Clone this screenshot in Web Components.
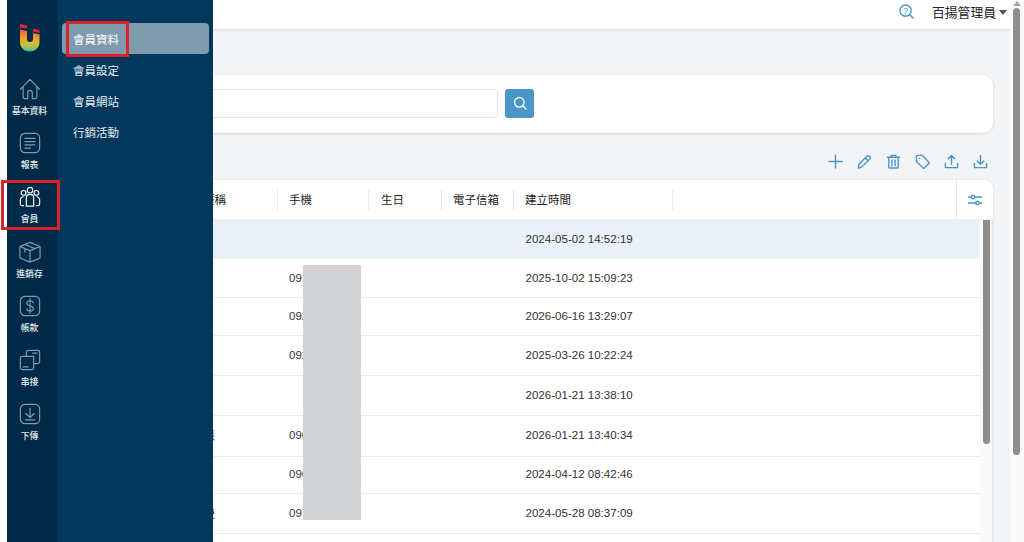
<!DOCTYPE html>
<html lang="zh-Hant">
<head>
<meta charset="utf-8">
<title>會員資料</title>
<style>
  html, body { margin: 0; height: 100%; overflow: hidden; }
  body { font-family: "Liberation Sans", "Noto Sans CJK TC", sans-serif; background: #fff; }
</style>
</head>
<body>
<app-shell>
  <nav-rail slot="rail"></nav-rail>
  <sub-menu slot="menu"></sub-menu>
  <top-bar slot="top"></top-bar>
  <search-card slot="content"></search-card>
  <tool-bar slot="content"></tool-bar>
  <member-table slot="content"></member-table>
</app-shell>

<script>
const RAIL_ICONS = {
  home: '<path d="M1.500 12.500 12 1.500l10.500 11M4.500 9.500V21a1.500 1.500 0 0 0 1.500 1.500h3.500V16a2.500 2.500 0 0 1 5 0v6.500H18a1.500 1.500 0 0 0 1.500-1.500V9.500"/>',
  report: '<rect x="1.500" y="1.500" width="21" height="21" rx="5"/><path d="M6.500 7h11M6.500 10.500h11M6.500 14h11M6.500 17.500h6"/>',
  members: '<circle cx="12" cy="4.500" r="3"/><circle cx="5" cy="7.500" r="2.600"/><circle cx="19" cy="7.500" r="2.600"/><path d="M8 22V12.500a3 3 0 0 1 3-3h2a3 3 0 0 1 3 3V22ZM5 21.500H3.500a2 2 0 0 1-2-2V15a3.500 3.500 0 0 1 3-3.300M19 21.500h1.500a2 2 0 0 0 2-2V15a3.500 3.500 0 0 0-3-3.300"/>',
  box: '<path d="M12 1.500 23 6v12.500L12 23 1 18.500V6ZM1 6l11 4.500L23 6M12 10.500V23M6.500 3.800 17.500 8.300M6.500 8.300V12"/>',
  money: '<rect x="1.500" y="1.500" width="21" height="21" rx="5"/><path d="M15.500 8.500C15 7 13.500 6.300 12 6.300c-2 0-3.500 1-3.500 2.800 0 3.800 7.200 1.800 7.200 5.700 0 1.800-1.700 2.800-3.700 2.800-1.700 0-3.200-.8-3.700-2.300M12 4v16"/>',
  link: '<path d="M8 8V3.500a2 2 0 0 1 2-2h10.500a2 2 0 0 1 2 2V14a2 2 0 0 1-2 2H16M16 8H3.500a2 2 0 0 0-2 2v10.500a2 2 0 0 0 2 2H14a2 2 0 0 0 2-2ZM15 4.500h4.500M4.500 19.500H10"/>',
  download: '<rect x="1.500" y="1.500" width="21" height="21" rx="5"/><path d="M12 5.500v10M7.500 11.500l4.500 4.500 4.500-4.500M7 18.500h10"/>'
};

const RAIL_ITEMS = [
  { icon: "home", label: "基本資料" },
  { icon: "report", label: "報表" },
  { icon: "members", label: "會員", active: true },
  { icon: "box", label: "進銷存" },
  { icon: "money", label: "帳款" },
  { icon: "link", label: "串接" },
  { icon: "download", label: "下傳" }
];

class AppShell extends HTMLElement {
  constructor() {
    super();
    this.attachShadow({ mode: "open" });
    this.shadowRoot.innerHTML = `
      <style>
        :host { display: flex; height: 542px; overflow: hidden; position: relative; padding-left: 7px; box-sizing: border-box; }
        .main { flex: 1; min-width: 0; background: #f3f4f6; overflow: hidden; }
        .content { padding: 46px 17px 0 14px; }
        .menu { position: absolute; left: 58px; top: 0; bottom: 0; z-index: 5; }
        .mask { position: absolute; left: 303px; top: 265px; width: 58px; height: 255px; background: #d1d2d3; z-index: 3; }
        .mark { position: absolute; box-sizing: border-box; border: 3px solid #d8232a; z-index: 6; }
        .mark.sub { left: 66px; top: 21px; width: 63px; height: 36px; }
        .mark.nav { left: 1px; top: 180px; width: 59px; height: 50px; }
        .scroll { width: 14px; flex: none; background: #fafafa; position: relative; }
        .arrow { width: 0; height: 0; margin: 1px auto 0; border: 4px solid transparent; border-top: 0; border-bottom: 5px solid #a8a8a8; }
        .thumb { width: 7px; height: 447px; margin: 2px 0 0 3px; background: #8e8e8e; border-radius: 4px; }
      </style>
      <slot name="rail"></slot>
      <div class="main">
        <slot name="top"></slot>
        <div class="content"><slot name="content"></slot></div>
      </div>
      <div class="scroll"><div class="arrow"></div><div class="thumb"></div></div>
      <div class="menu"><slot name="menu"></slot></div>
      <div class="mask"></div>
      <div class="mark sub"></div>
      <div class="mark nav"></div>
    `;
  }
}

class NavRail extends HTMLElement {
  constructor() {
    super();
    this.attachShadow({ mode: "open" });
    const items = RAIL_ITEMS.map((i) => `
      <div class="item ${i.active ? "on" : ""}">
        <svg viewBox="0 0 24 24" width="22" height="22">${RAIL_ICONS[i.icon]}</svg>
        <span>${i.label}</span>
      </div>`).join("");
    this.shadowRoot.innerHTML = `
      <style>
        :host { display: block; width: 51px; flex: none; background: #002a47; color: #e6ebef; box-sizing: border-box; padding-right: 6px; }
        .logo { display: block; margin: 24px 0 26px 13px; }
        .item { display: flex; flex-direction: column; align-items: center; height: 54.200px; }
        svg { fill: none; stroke: #7f99ad; stroke-width: 1.300; stroke-linecap: round; stroke-linejoin: round; }
        .on svg { stroke: #f2f5f7; }
        span { font-size: 8.800px; line-height: 12px; margin-top: 5px; white-space: nowrap; font-weight: 500; }
      </style>
      <svg class="logo" viewBox="0 0 20 28" width="20" height="28" style="stroke:none">
        <defs><linearGradient id="u" x1="0" y1="0" x2="0" y2="1">
          <stop offset="0" stop-color="#ef5a3c"/><stop offset=".4" stop-color="#f4a12c"/><stop offset=".7" stop-color="#c3c440"/><stop offset="1" stop-color="#3fbf9a"/>
        </linearGradient></defs>
        <path fill="#e4234f" d="M0 0 7 1.500V4.500L0 3.500ZM13 4.500l6.500 1.500v3L13 7.500Z"/>
        <path fill="url(#u)" d="M0 5.500 7 7V15a3 3 0 0 0 6 0V9l6.500 1.500V18c0 5.500-4 9.500-9.750 9.500S0 23.500 0 18Z"/>
      </svg>
      ${items}
    `;
  }
}

class SubMenu extends HTMLElement {
  constructor() {
    super();
    this.attachShadow({ mode: "open" });
    const rows = ["會員資料", "會員設定", "會員網站", "行銷活動"]
      .map((t, i) => `<div class="row ${i === 0 ? "on" : ""}">${t}</div>`).join("");
    this.shadowRoot.innerHTML = `
      <style>
        :host { display: block; width: 155px; height: 100%; background: #03375b; color: #e8edf1; box-sizing: border-box; padding: 23px 4px 0 4px; }
        .row { height: 31px; line-height: 35px; padding-left: 11px; font-size: 11.500px; border-radius: 4px; }
        .on { background: #7f99ad; color: #fff; }
      </style>
      ${rows}
    `;
  }
}

class TopBar extends HTMLElement {
  constructor() {
    super();
    this.attachShadow({ mode: "open" });
    this.shadowRoot.innerHTML = `
      <style>
        :host { display: flex; align-items: center; justify-content: flex-end; height: 29px; background: #fff; box-shadow: 0 1px 3px rgba(0,0,0,.14); padding-right: 3px; position: relative; color: #222; }
        svg { fill: none; stroke: #4a96c9; stroke-width: 1.500; stroke-linecap: round; margin-right: 18px; margin-top: -6px; }
        .name { font-size: 12.800px; margin-top: -6px; }
        .caret { width: 0; height: 0; border: 4px solid transparent; border-bottom: 0; border-top: 5px solid #555; margin: -4px 0 0 3px; }
        text { font: 9px "Liberation Sans", sans-serif; fill: #4a96c9; stroke: none; }
      </style>
      <svg viewBox="0 0 16 16" width="15" height="15"><circle cx="7" cy="7" r="6"/><path d="M11.500 11.500l3.500 3.500"/><text x="4.500" y="10.200">?</text></svg>
      <span class="name">百揚管理員</span><span class="caret"></span>
    `;
  }
}

class SearchCard extends HTMLElement {
  constructor() {
    super();
    this.attachShadow({ mode: "open" });
    this.shadowRoot.innerHTML = `
      <style>
        :host { display: flex; align-items: center; gap: 7px; height: 58px; box-sizing: border-box; padding: 0 0 2px 14px; background: #fff; border-radius: 10px; box-shadow: 0 1px 3px rgba(0,0,0,.13); }
        .input { width: 410px; height: 27px; border: 1px solid #e3e4e6; border-radius: 3px; }
        .btn { width: 29px; height: 29px; background: #4a96c9; border-radius: 3px; display: flex; align-items: center; justify-content: center; }
        svg { fill: none; stroke: #fff; stroke-width: 1.300; stroke-linecap: round; }
      </style>
      <div class="input"></div>
      <div class="btn"><svg viewBox="0 0 14 14" width="14" height="14"><circle cx="6.300" cy="6.300" r="4.800"/><path d="M10 10l3 3"/></svg></div>
    `;
  }
}

class ToolBar extends HTMLElement {
  constructor() {
    super();
    this.attachShadow({ mode: "open" });
    const icons = [
      '<path d="M8 1v14M1 8h14"/>',
      '<path d="M2 11 10.500 2.500a1.800 1.800 0 0 1 3 3L5 14l-3.500 1ZM9 4.500l2.500 2.500"/>',
      '<path d="M1.500 3.500h13M5.500 3.500V1.500h5v2M3 3.500v10.500a1 1 0 0 0 1 1h8a1 1 0 0 0 1-1V3.500M6.300 6.500v6M9.700 6.500v6"/>',
      '<path d="M1.500 2.500a1 1 0 0 1 1-1H8l6.800 7.300a1 1 0 0 1 0 1.400L10 15a1 1 0 0 1-1.400 0L1.500 8ZM4.800 4.800h.1"/>',
      '<path d="M1.500 10v4.500h13V10M8 11V2M4.500 5 8 1.500 11.500 5"/>',
      '<path d="M1.500 10v4.500h13V10M8 1.500V11M4.500 7.500 8 11l3.500-3.500"/>'
    ].map((p) => `<svg viewBox="0 0 16 16" width="15" height="15">${p}</svg>`).join("");
    this.shadowRoot.innerHTML = `
      <style>
        :host { display: flex; justify-content: flex-end; gap: 14px; height: 47px; box-sizing: border-box; padding: 9px 5px 0 0; align-items: center; }
        svg { fill: none; stroke: #4a96c9; stroke-width: 1.500; stroke-linecap: round; stroke-linejoin: round; }
      </style>
      ${icons}
    `;
  }
}

const MEMBER_ROWS = [
  { h: 40, phone: "", at: "2024-05-02 14:52:19", on: true },
  { h: 38, phone: "0912", at: "2025-10-02 15:09:23" },
  { h: 38, phone: "0921", at: "2026-06-16 13:29:07" },
  { h: 40, phone: "0928", at: "2025-03-26 10:22:24" },
  { h: 40, phone: "", at: "2026-01-21 13:38:10" },
  { h: 41, name: "陳小慧", phone: "0963", at: "2026-01-21 13:40:34" },
  { h: 37, phone: "0966", at: "2024-04-12 08:42:46" },
  { h: 40, name: "林佳瑩", phone: "0975", at: "2024-05-28 08:37:09" },
  { h: 40, phone: "", at: "" }
];

class MemberTable extends HTMLElement {
  constructor() {
    super();
    this.attachShadow({ mode: "open" });
    const rows = MEMBER_ROWS.map((r) => `
      <div class="row ${r.on ? "on" : ""}" style="height:${r.h}px">
        <div class="name">${r.name || ""}</div>
        <div class="phone">${r.phone}</div>
        <div></div><div></div>
        <div class="at">${r.at}</div>
      </div>`).join("");
    this.shadowRoot.innerHTML = `
      <style>
        :host { display: block; background: #fff; border-radius: 8px 8px 0 0; box-shadow: 0 0 2px rgba(0,0,0,.14); height: 400px; font-size: 11.500px; color: #333; overflow: hidden; }
        .head, .row { display: grid; grid-template-columns: 206px 91px 73px 72px 159px; align-items: center; }
        .head { height: 39px; border-bottom: 1px solid #eceef0; grid-template-columns: 206px 91px 73px 72px 159px 1fr 37px; color: #222; }
        .head > div { height: 20px; line-height: 20px; padding-left: 11px; border-right: 1px solid #e6e7e9; box-sizing: border-box; white-space: nowrap; }
        .head > .birth { padding-left: 12px; }
        .head .name { text-align: right; padding: 0 51px 0 0; }
        .head .blank { border-right: 0; }
        .head .cfg { height: 39px; border-right: 0; border-left: 1px solid #e6e7e9; padding: 0 1px 0 0; display: flex; align-items: center; justify-content: center; }
        .cfg svg { fill: none; stroke: #4a96c9; stroke-width: 1.500; stroke-linecap: round; }
        .body { display: flex; }
        .rows { flex: 1; min-width: 0; }
        .row { box-sizing: border-box; border-bottom: 1px solid #ebeced; padding-bottom: 2px; }
        .on { background: #e9f0f7; border-bottom-color: #fff; }
        .phone { padding-left: 11px; }
        .at { padding-left: 11.500px; font-size: 11.550px; white-space: nowrap; }
        .name { text-align: right; padding-right: 63px; }
        .track { width: 13px; flex: none; background: #fafafa; border-right: 1px solid #e4e5e7; box-sizing: border-box; }
        .thumb { width: 7px; height: 224px; margin-left: 3px; background: #8e8e8e; border-radius: 0 0 4px 4px; }
      </style>
      <div class="head">
        <div class="name">暱稱</div><div>手機</div><div class="birth">生日</div><div>電子信箱</div><div>建立時間</div><div class="blank"></div>
        <div class="cfg"><svg viewBox="0 0 14 12" width="14" height="12"><path d="M0 3h14M0 9h14"/><circle cx="5" cy="3" r="1.700" fill="#fff"/><circle cx="9.500" cy="9" r="1.700" fill="#fff"/></svg></div>
      </div>
      <div class="body">
        <div class="rows">${rows}</div>
        <div class="track"><div class="thumb"></div></div>
      </div>
    `;
  }
}

customElements.define("app-shell", AppShell);
customElements.define("nav-rail", NavRail);
customElements.define("sub-menu", SubMenu);
customElements.define("top-bar", TopBar);
customElements.define("search-card", SearchCard);
customElements.define("tool-bar", ToolBar);
customElements.define("member-table", MemberTable);
</script>
</body>
</html>
